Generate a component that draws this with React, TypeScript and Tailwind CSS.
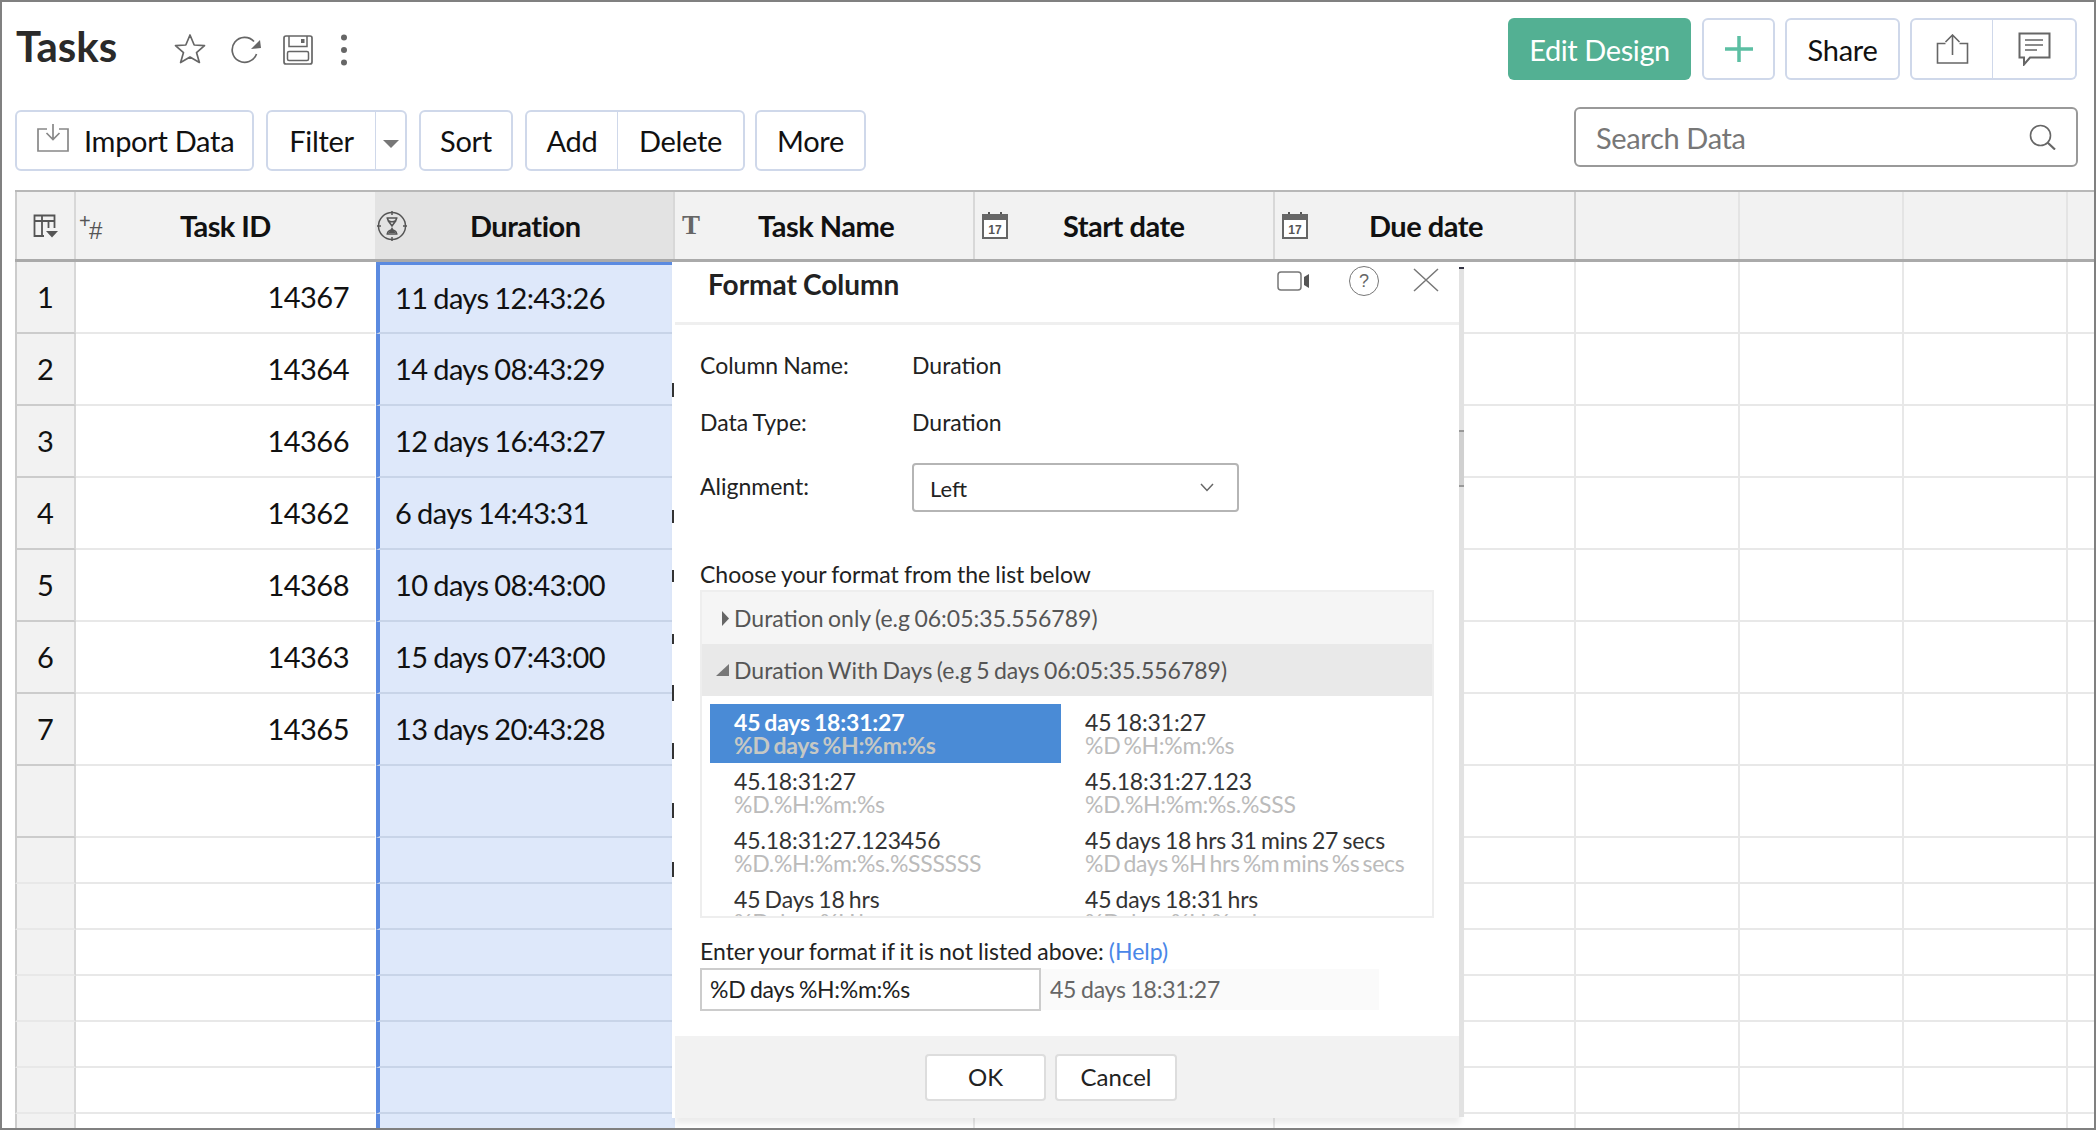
import { Fragment } from 'react';

const ROWS = [
  { n: '1', id: '14367', dur: '11 days 12:43:26' },
  { n: '2', id: '14364', dur: '14 days 08:43:29' },
  { n: '3', id: '14366', dur: '12 days 16:43:27' },
  { n: '4', id: '14362', dur: '6 days 14:43:31' },
  { n: '5', id: '14368', dur: '10 days 08:43:00' },
  { n: '6', id: '14363', dur: '15 days 07:43:00' },
  { n: '7', id: '14365', dur: '13 days 20:43:28' },
  { n: '', id: '', dur: '' },
  ...Array.from({ length: 7 }, () => ({ n: '', id: '', dur: '', short: true })),
];

const FORMATS = [
  ['45 days 18:31:27', '%D days %H:%m:%s'],
  ['45 18:31:27', '%D %H:%m:%s'],
  ['45.18:31:27', '%D.%H:%m:%s'],
  ['45.18:31:27.123', '%D.%H:%m:%s.%SSS'],
  ['45.18:31:27.123456', '%D.%H:%m:%s.%SSSSSS'],
  ['45 days 18 hrs 31 mins 27 secs', '%D days %H hrs %m mins %s secs'],
  ['45 Days 18 hrs', '%D days %H hrs'],
  ['45 days 18:31 hrs', '%D days %H:%m hrs'],
];

// left edges of the Task Name text peeking out from behind the dialog
const PEEKS = [
  [383, 14], [510, 13], [570, 12], [634, 10], [685, 16], [743, 16], [803, 15], [862, 15],
];

const GRID = 'grid grid-cols-[61px_299px_300px_300px_300px_301px_164px_164px_164px_26px]';

function CalendarIcon() {
  return (
    <svg width="26" height="27" viewBox="0 0 26 27" fill="none">
      <path d="M7 0v4M19 0v4" stroke="#555" strokeWidth="2" />
      <rect x="1" y="3" width="24" height="23" fill="#fff" stroke="#666" strokeWidth="2" />
      <rect x="1" y="3" width="24" height="5" fill="#666" />
      <text x="13" y="22" textAnchor="middle" fontSize="12" fontWeight="700" fill="#555" fontFamily="Liberation Sans, sans-serif">17</text>
    </svg>
  );
}

function HeaderCell({ icon, label, labelLeft, active, line }: { icon: React.ReactNode; label: string; labelLeft: string; active?: boolean; line: string }) {
  return (
    <div className={`flex h-full items-center border-r-2 ${line} ${active ? 'bg-[#e3e3e3]' : ''}`}>
      <span className="flex w-0 items-center">{icon}</span>
      <span className={`${labelLeft} whitespace-nowrap text-[29px] leading-none font-bold tracking-[-0.5px] text-[#111]`}>{label}</span>
    </div>
  );
}

function Btn({ className, children }: { className: string; children: React.ReactNode }) {
  return (
    <div className={`flex h-full items-center justify-center border-2 border-[#cfd8ea] bg-white text-[29px] leading-none tracking-[-0.3px] text-[#111] ${className}`}>
      {children}
    </div>
  );
}

export default function App() {
  return (
    <div className="relative h-[1130px] w-[2096px] overflow-hidden border-2 border-[#808080] bg-white font-['Lato',sans-serif]">
      {/* title row */}
      <div className="mt-[16px] flex h-[62px] items-center justify-between pr-[17px] pl-[14px]">
        <div className="flex items-center">
          <h1 className="w-[158px] -translate-y-[3px] text-[42px] leading-none font-bold text-[#2a2a2a]">Tasks</h1>
          <svg width="32" height="31" viewBox="0 0 32 31" fill="none" className="-translate-y-[1px]">
            <path d="M16 2l4.2 10 10.3.6-8 7 2.9 9.9L16 24l-9.4 5.5 2.9-9.9-8-7L11.800 12z" stroke="#666" strokeWidth="1.7" strokeLinejoin="round" />
          </svg>
          <svg width="32" height="28" viewBox="0 0 32 28" fill="none" className="ml-[24px] translate-y-[1px]">
            <path d="M24 5.500A12.500 12.500 0 1 0 26.500 18" stroke="#666" strokeWidth="1.7" />
            <path d="M21 9l10-1-1-8z" fill="#666" transform="translate(0 4)" />
          </svg>
          <svg width="30" height="30" viewBox="0 0 30 30" fill="none" className="ml-[21px] translate-y-[1px]">
            <rect x="1" y="1" width="28" height="28" rx="2" stroke="#666" strokeWidth="1.700" />
            <path d="M6 1v10.500h18V1" stroke="#666" strokeWidth="1.500" />
            <rect x="18" y="4" width="3.500" height="4" fill="#666" />
            <rect x="4.500" y="16.500" width="21" height="9" rx="1.500" stroke="#666" strokeWidth="1.500" />
          </svg>
          <svg width="6" height="32" viewBox="0 0 6 32" className="ml-[28px] translate-y-[1px]">
            <circle cx="3" cy="3.500" r="3" fill="#666" />
            <circle cx="3" cy="16" r="3" fill="#666" />
            <circle cx="3" cy="28.500" r="3" fill="#666" />
          </svg>
        </div>
        <div className="flex h-full items-stretch">
          <div className="flex w-[183px] items-center justify-center rounded-[6px] bg-[#53b093] text-[29px] leading-none tracking-[-0.4px] text-white">Edit Design</div>
          <Btn className="ml-[11px] w-[73px] rounded-[6px]">
            <svg width="28" height="26" viewBox="0 0 28 26"><path d="M14 0v26M0 13h28" stroke="#5cbfa3" strokeWidth="3.500" /></svg>
          </Btn>
          <Btn className="ml-[10px] w-[115px] rounded-[6px]">Share</Btn>
          <Btn className="ml-[10px] w-[84px] rounded-l-[6px]">
            <svg width="33" height="30" viewBox="0 0 33 30" fill="none">
              <path d="M9.500 9.500H1.500V29h30V9.500h-8M16.500 21V1M9.500 8l7-7 7 7" stroke="#666" strokeWidth="1.600" />
            </svg>
          </Btn>
          <Btn className="-ml-[1px] w-[84px] rounded-r-[6px] border-l-0">
            <svg width="33" height="34" viewBox="0 0 33 34" fill="none">
              <path d="M1.500 1.500h30v24H12l-6 7v-7H1.500z" stroke="#666" strokeWidth="2" />
              <path d="M7 8h18M7 13h18M7 18h12" stroke="#666" strokeWidth="1.600" />
            </svg>
          </Btn>
        </div>
      </div>

      {/* toolbar */}
      <div className="mt-[30px] flex h-[61px] items-start justify-between pr-[16px] pl-[13px]">
        <div className="flex h-full items-stretch">
          <Btn className="w-[239px] justify-start rounded-[6px] pl-[20px]">
            <svg width="32" height="28" viewBox="0 0 32 28" fill="none" className="-translate-y-[3px]">
              <path d="M10 5H1v22h30V5h-9M16 0v15M9.500 9l6.500 6.500L22.500 9" stroke="#888" strokeWidth="1.700" />
            </svg>
            <span className="ml-[15px]">Import Data</span>
          </Btn>
          <Btn className="ml-[12px] w-[111px] rounded-l-[6px]">Filter</Btn>
          <Btn className="-ml-[1px] w-[31px] rounded-r-[6px] border-l-0">
            <svg width="16" height="8" viewBox="0 0 16 8" className="translate-y-[3px]"><path d="M0 0h16L8 8z" fill="#777" /></svg>
          </Btn>
          <Btn className="ml-[12px] w-[94px] rounded-[6px]">Sort</Btn>
          <Btn className="ml-[12px] w-[94px] rounded-l-[6px]">Add</Btn>
          <Btn className="-ml-[1px] w-[127px] rounded-r-[6px] border-l-0">Delete</Btn>
          <Btn className="ml-[10px] w-[111px] rounded-[6px]">More</Btn>
        </div>
        <div className="-mt-[3px] flex h-[60px] w-[504px] items-center justify-between rounded-[6px] border-2 border-[#999] pr-[20px] pl-[20px]">
          <span className="text-[29px] leading-none tracking-[-0.35px] text-[#777]">Search Data</span>
          <svg width="27" height="26" viewBox="0 0 27 26" fill="none">
            <circle cx="11.500" cy="11.500" r="10" stroke="#666" strokeWidth="1.600" />
            <path d="M18.500 18.500L26 25.500" stroke="#666" strokeWidth="2.200" />
          </svg>
        </div>
      </div>

      {/* sheet */}
      <div className="mt-[19px] ml-[13px]">
        <div className={`${GRID} h-[72px] border-t-2 border-b-[3px] border-t-[#b8b8b8] border-b-[#aaa] bg-[#f2f2f2]`}>
          <div className="flex items-center justify-center border-x-2 border-r-[#d8d8d8] border-l-[#ccc]">
            <svg width="26" height="24" viewBox="0 0 26 24" fill="none">
              <path d="M11 22H1.500V1.500h20V14M1.500 7h20M9 1.500V22M15.500 7v7" stroke="#555" strokeWidth="1.800" />
              <path d="M13 17h12l-6 6.500z" fill="#555" />
            </svg>
          </div>
          <div className="relative flex h-full items-center">
            <span className="absolute top-[19px] left-[3px] font-['Liberation_Sans',sans-serif] text-[20px] leading-none text-[#555]">+</span>
            <span className="absolute top-[27px] left-[13px] font-['Liberation_Sans',sans-serif] text-[24px] leading-none text-[#555]">#</span>
            <span className="ml-[104px] text-[29px] leading-none font-bold tracking-[-0.6px] text-[#111]">Task ID</span>
          </div>
          <HeaderCell
            active
            line="border-r-[#d8d8d8]"
            labelLeft="ml-[95px]"
            label="Duration"
            icon={
              <svg width="30" height="30" viewBox="0 0 30 30" fill="none" className="ml-[2px] shrink-0">
                <circle cx="15" cy="15" r="13.500" stroke="#555" strokeWidth="1.500" />
                <path d="M15 0v4M15 26v4M0 15h4M26 15h4" stroke="#555" strokeWidth="1.500" />
                <path d="M9.500 7h11M9.500 23h11M10.500 7c0 5 9 5 9 0M10.500 23c0-5 9-5 9 0M11 9.500l4 5.500 4-5.500" stroke="#555" strokeWidth="1.600" />
                <path d="M15 16l-3.500 6h7z" fill="#555" />
              </svg>
            }
          />
          <HeaderCell
            line="border-r-[#d8d8d8]"
            labelLeft="ml-[83px]"
            label="Task Name"
            icon={<span className="ml-[7px] font-['Liberation_Serif',serif] text-[27px] leading-none font-bold text-[#666]">T</span>}
          />
          <HeaderCell line="border-r-[#d8d8d8]" labelLeft="ml-[88px]" label="Start date" icon={<span className="ml-[7px] flex"><CalendarIcon /></span>} />
          <HeaderCell line="border-r-[#cfcfcf]" labelLeft="ml-[94px]" label="Due date" icon={<span className="ml-[7px] flex"><CalendarIcon /></span>} />
          <div className="border-r-2 border-[#e4e4e4]" />
          <div className="border-r-2 border-[#e4e4e4]" />
          <div className="border-r-2 border-[#e4e4e4]" />
          <div />
        </div>

        {ROWS.map((row, i) => (
          <div key={i} className={`${GRID} ${'short' in row ? 'h-[46px]' : 'h-[72px]'}`}>
            <div className={`flex items-center justify-center border-x-2 border-b-2 border-r-[#d8d8d8] border-l-[#ccc] bg-[#f2f2f2] pb-[2px] text-[29px] leading-none text-[#111] ${i < 8 ? 'border-b-[#ccc]' : 'border-b-[#e8e8e8]'}`}>
              {row.n}
            </div>
            <div className="flex items-center justify-end border-b-2 border-[#e8e8e8] pr-[26px] pb-[2px] text-[29px] leading-none tracking-[-0.5px] text-[#111]">{row.id}</div>
            <div className={`ml-[1px] flex items-center border-b-2 border-l-[4px] border-b-[#c8d4e8] border-l-[#5b8ae0] bg-[#dee8fa] pb-[2px] pl-[15px] text-[29px] leading-none tracking-[-0.6px] [word-spacing:-1px] text-[#111] ${i === 0 ? 'border-t-[3px] border-t-[#5b8ae0]' : ''}`}>
              {row.dur}
            </div>
            {[0, 1, 2, 3, 4, 5, 6].map((c) => (
              <div key={c} className={`${c === 6 ? 'border-b-2' : 'border-r-2 border-b-2'} border-[#e8e8e8]`} />
            ))}
          </div>
        ))}
      </div>

      {/* format dialog */}
      <div className="absolute top-[260px] left-[673px] flex h-[856px] w-[785px] flex-col bg-white text-[23px] leading-none [word-spacing:-0.8px] text-[#222] shadow-[-3px_0_0_#fff,0_6px_6px_rgba(0,0,0,0.08)]">
        <div className="absolute top-[5px] -right-[4px] h-[850px] w-[5px] bg-[#e2e2e2]">
          <div className="h-[2px] bg-[#334]" />
          <div className="mt-[161px] h-[57px] border-y-2 border-[#999] bg-[#d0d0d0]" />
        </div>

        <div className="flex h-[63px] shrink-0 items-start justify-between border-b-[3px] border-[#efefef] pt-[4px] pr-[21px] pl-[33px]">
          <span className="mt-[4px] text-[28px] leading-[28px] font-bold text-[#222]">Format Column</span>
          <div className="flex items-start">
            <svg width="32" height="20" viewBox="0 0 32 20" fill="none" className="mt-[5px]">
              <rect x="1" y="1" width="23" height="18" rx="3" stroke="#777" strokeWidth="1.500" />
              <path d="M27 6l5-3v14l-5-3z" fill="#555" />
            </svg>
            <span className="relative ml-[40px] flex h-[30px] w-[30px] items-center justify-center rounded-full border-[1.500px] border-[#777] font-['Liberation_Sans',sans-serif] text-[18px] text-[#666]">?</span>
            <svg width="26" height="24" viewBox="0 0 26 24" className="mt-[2px] ml-[34px]">
              <path d="M1 1l24 22M25 1L1 23" stroke="#777" strokeWidth="1.500" />
            </svg>
          </div>
        </div>

        <div className="pl-[25px]">
          <div className="mt-[20px] grid h-[40px] grid-cols-[212px_1fr] items-center">
            <span>Column Name:</span>
            <span>Duration</span>
          </div>
          <div className="mt-[17px] grid h-[40px] grid-cols-[212px_1fr] items-center">
            <span>Data Type:</span>
            <span>Duration</span>
          </div>
          <div className="mt-[21px] grid h-[49px] grid-cols-[212px_1fr] items-center">
            <span className="-translate-y-[1px]">Alignment:</span>
            <div className="flex h-[49px] w-[327px] items-center justify-between rounded-[4px] border-2 border-[#b5b5b5] pr-[23px] pl-[16px]">
              <span className="translate-y-[1px] text-[22px]">Left</span>
              <svg width="14" height="9" viewBox="0 0 14 9" fill="none"><path d="M1 1l6 6.500L13 1" stroke="#666" strokeWidth="1.500" /></svg>
            </div>
          </div>
          <div className="mt-[49px] flex h-[28px] -translate-y-[1px] items-center">Choose your format from the list below</div>

          <div className="mt-[1px] h-[328px] w-[734px] overflow-hidden border-2 border-[#eee] [word-spacing:-1.5px]">
            <div className="relative flex h-[52px] items-center bg-[#f5f5f5] pl-[32px] text-[#555]">
              <svg width="7" height="15" viewBox="0 0 7 15" className="absolute left-[20px]"><path d="M0 0l7 7.500L0 15z" fill="#666" /></svg>
              Duration only (e.g 06:05:35.556789)
            </div>
            <div className="relative flex h-[52px] items-center bg-[#e9e9e9] pl-[32px] text-[#555]">
              <svg width="13" height="12" viewBox="0 0 13 12" className="absolute left-[14px]"><path d="M13 0v12H0z" fill="#777" /></svg>
              Duration With Days (e.g 5 days 06:05:35.556789)
            </div>
            <div className="grid grid-cols-[351px_1fr] pt-[8px] pl-[8px]">
              {FORMATS.map(([main, sub], i) => (
                <Fragment key={main}>
                  <div className={`h-[59px] pt-[7px] pl-[24px] whitespace-nowrap ${i === 0 ? 'bg-[#4a8bd6]' : ''}`}>
                    <div className={`h-[23px] leading-[23px] ${i === 0 ? 'font-bold tracking-[-0.17px] text-white' : 'tracking-[-0.15px] text-[#333]'}`}>{main}</div>
                    <div className={`h-[23px] leading-[23px] ${i === 0 ? 'font-bold tracking-[-0.3px] text-[#c6c8c4]' : 'tracking-[-0.3px] [word-spacing:-2.5px] text-[#bbb]'}`}>{sub}</div>
                  </div>
                </Fragment>
              ))}
            </div>
          </div>

          <div className="mt-[19px] flex h-[28px] items-center whitespace-pre">
            Enter your format if it is not listed above: <span className="text-[#4a86e8]">(Help)</span>
          </div>
          <div className="mt-[3px] flex h-[43px]">
            <div className="flex w-[341px] items-center border-2 border-[#ccc] pl-[8px] tracking-[-0.3px] [word-spacing:-1px]">%D days %H:%m:%s</div>
            <div className="my-[1px] flex w-[338px] items-center bg-[#fafafa] pl-[9px] tracking-[-0.25px] text-[#666]">45 days 18:31:27</div>
          </div>
        </div>

        <div className="mt-[25px] flex h-[82px] items-center gap-[9px] bg-[#f2f2f2] pl-[250px]">
          <div className="flex h-[47px] w-[121px] items-center justify-center rounded-[4px] border-2 border-[#ddd] bg-white text-[24px]">OK</div>
          <div className="flex h-[47px] w-[122px] items-center justify-center rounded-[4px] border-2 border-[#ddd] bg-white text-[24px]">Cancel</div>
        </div>
      </div>

      {PEEKS.map(([top, h]) => (
        <div key={top} className="absolute left-[670px] w-[2px] bg-[#333]" style={{ top: top - 2, height: h }} />
      ))}
    </div>
  );
}
